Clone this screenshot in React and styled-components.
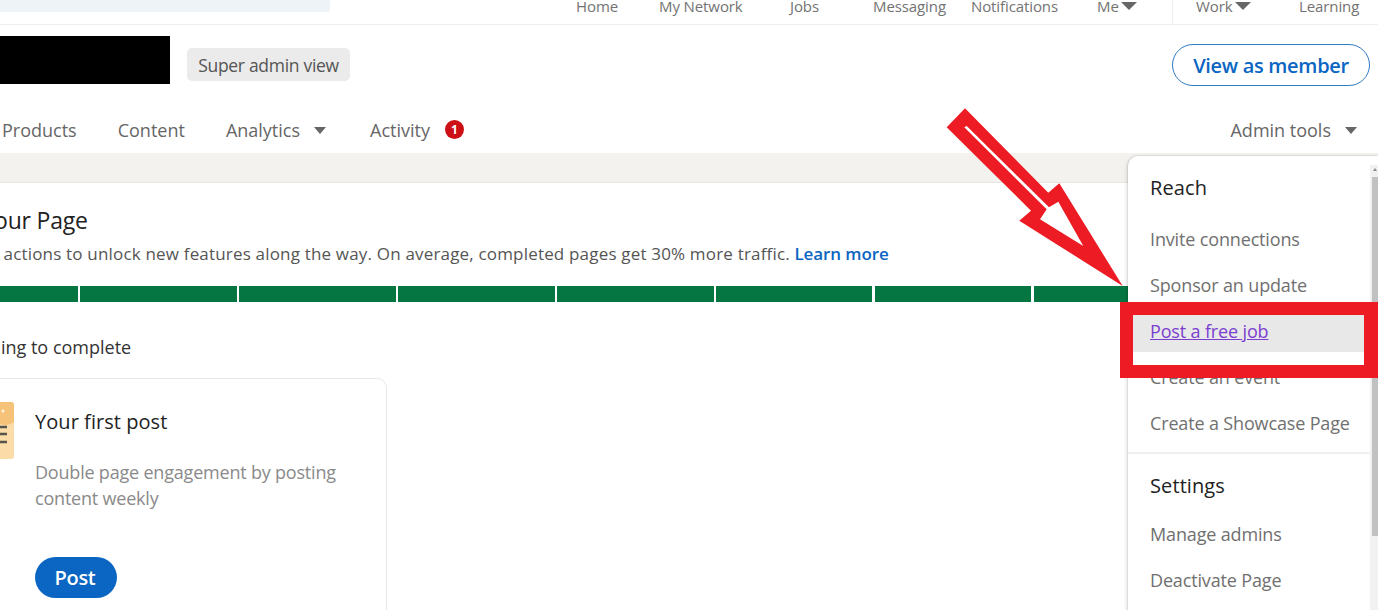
import React from 'react';
import styled, { createGlobalStyle } from 'styled-components';

const GlobalStyle = createGlobalStyle`
html, body {
  margin: 0;
  padding: 0;
  background: #fff;
  overflow: hidden;
}
body {
  font-family: "Open Sans", "Noto Sans", "Liberation Sans", sans-serif;
  color: #666;
}
`;

const Page = styled.div`
  position: relative;
  width: 1378px;
  height: 610px;
  overflow: hidden;
  background: #fff;
`;

const TopNav = styled.div`
  display: flex;
  justify-content: space-between;
  box-sizing: border-box;
  height: 25px;
  border-bottom: 1px solid #eeeeee;
`;
const SearchBar = styled.div`
  width: 330px;
  height: 12px;
  background: #eef3f8;
  border-radius: 0 0 2px 0;
`;
const NavLinks = styled.div`
  display: flex;
  align-items: flex-start;
  height: 24px;
`;
const NavLink = styled.div`
  display: flex;
  align-items: center;
  gap: 2px;
  width: ${(p) => p.$w}px;
  height: 12px;
  font-size: 15px;
  letter-spacing: -0.1px;
  line-height: 12px;
  color: #737373;
  white-space: nowrap;
`;
const NavDivider = styled.div`
  width: 1px;
  height: 24px;
  background: #eeeeee;
  margin-right: 23px;
`;
const TinyCaret = styled.span`
  width: 0;
  height: 0;
  border-left: 8px solid transparent;
  border-right: 8px solid transparent;
  border-top: 8px solid #666;
`;

const HeaderRow = styled.div`
  display: flex;
  align-items: flex-start;
  justify-content: space-between;
  height: 80px;
  padding-right: 8px;
`;
const HeaderLeft = styled.div`
  display: flex;
  align-items: flex-start;
  gap: 17px;
`;
const Redacted = styled.div`
  width: 170px;
  height: 48px;
  margin-top: 11px;
  background: #000;
`;
const RoleBadge = styled.div`
  width: 163px;
  height: 33px;
  margin-top: 23px;
  border-radius: 5px;
  background: #ebebeb;
  display: flex;
  align-items: center;
  justify-content: center;
  font-size: 17.5px;
  letter-spacing: -0.3px;
  color: #555;
`;
const MemberButton = styled.button`
  width: 198px;
  height: 42px;
  margin-top: 19px;
  border: 1.5px solid #2f7bc4;
  border-radius: 21px;
  background: #fff;
  color: #0a66c2;
  font-family: inherit;
  font-size: 20px;
  font-weight: 600;
  letter-spacing: -0.3px;
  padding: 0;
`;

const TabsRow = styled.div`
  display: flex;
  align-items: center;
  justify-content: space-between;
  box-sizing: border-box;
  height: 48px;
  padding: 2px 21px 0 2px;
`;
const Tabs = styled.div`
  display: flex;
  align-items: center;
  gap: 41px;
`;
const Tab = styled.div`
  display: flex;
  align-items: center;
  gap: ${(p) => p.$gap || 14}px;
  margin-left: ${(p) => p.$lead || 0}px;
  font-size: 18px;
  color: #666;
  white-space: nowrap;
`;
const Caret = styled.span`
  width: 0;
  height: 0;
  border-left: 6.5px solid transparent;
  border-right: 6.5px solid transparent;
  border-top: 7px solid #666;
`;
const Badge = styled.span`
  width: 19px;
  height: 19px;
  border-radius: 50%;
  background: #cc1016;
  color: #fff;
  font-size: 12px;
  font-weight: 700;
  display: flex;
  align-items: center;
  justify-content: center;
  margin-top: -2px;
`;

const Band = styled.div`
  height: 29px;
  background: #f3f2ee;
  border-bottom: 1px solid #e6e6e3;
`;

const Content = styled.div`
  padding: 23px 0 0;
`;
const Title = styled.h1`
  margin: 0 0 0 -125px;
  font-size: 23px;
  line-height: 28px;
  font-weight: 400;
  letter-spacing: -0.2px;
  color: #222;
  white-space: nowrap;
`;
const Lead = styled.p`
  margin: 8px 0 0 -79px;
  font-size: 17px;
  line-height: 24px;
  letter-spacing: 0.18px;
  color: #555;
  white-space: nowrap;
`;
const LearnMore = styled.span`
  color: #0a66c2;
  font-weight: 600;
  letter-spacing: -0.1px;
`;
const Progress = styled.div`
  display: flex;
  gap: 2.3px;
  margin: 20px 0 0 -78.6px;
  width: 1240px;
`;
const Segment = styled.div`
  flex: 0 0 156.6px;
  height: 16px;
  background: #057642;
`;
const Subhead = styled.h2`
  margin: 33px 0 0 -64px;
  font-size: 18px;
  line-height: 24px;
  font-weight: 500;
  color: #333;
  white-space: nowrap;
`;
const Card = styled.div`
  display: flex;
  gap: 21px;
  width: 407px;
  height: 260px;
  margin: 19px 0 0 -20px;
  box-sizing: border-box;
  padding: 23px 0 0 19px;
  border: 1px solid #e8e8e8;
  border-radius: 10px;
  background: #fff;
`;
const CardBody = styled.div`
  display: flex;
  flex-direction: column;
  align-items: flex-start;
  padding-top: 7px;
`;
const CardTitle = styled.div`
  font-size: 20px;
  line-height: 26px;
  font-weight: 500;
  letter-spacing: 0.05px;
  color: #222;
`;
const CardText = styled.div`
  margin-top: 24px;
  width: 320px;
  font-size: 18px;
  line-height: 26px;
  letter-spacing: -0.2px;
  color: #8a8a8a;
`;
const PostButton = styled.button`
  width: 82px;
  height: 41px;
  margin-top: 46px;
  border: none;
  border-radius: 21px;
  background: #0a66c2;
  color: #fff;
  font-family: inherit;
  font-size: 20px;
  font-weight: 600;
  letter-spacing: -0.3px;
  padding: 0 2px 0 0;
`;

const Menu = styled.div`
  position: absolute;
  left: 1128px;
  top: 156px;
  width: 250px;
  height: 470px;
  background: #fff;
  border-radius: 10px 0 0 0;
  box-shadow: 0 0 0 1px rgba(0, 0, 0, 0.06), -1px 1px 4px rgba(0, 0, 0, 0.14);
`;
const MenuSection = styled.div`
  width: 220px;
  padding: 16px 0 6px 22px;
  border-top: ${(p) => (p.$divided ? '2px solid #f0f0f0' : 'none')};
`;
const MenuHeading = styled.div`
  font-size: 20px;
  line-height: 32px;
  font-weight: 500;
  letter-spacing: 0.1px;
  color: #222;
  margin-bottom: ${(p) => p.$gap}px;
`;
const MenuItem = styled.div`
  height: ${(p) => (p.$active ? 44 : 46)}px;
  margin-bottom: ${(p) => (p.$active ? 2 : 0)}px;
  line-height: 46px;
  margin-left: -22px;
  padding-left: 22px;
  font-size: 18px;
  letter-spacing: -0.15px;
  white-space: nowrap;
  color: ${(p) => (p.$active ? '#7b3fd0' : '#707070')};
  text-decoration: ${(p) => (p.$active ? 'underline' : 'none')};
  background: ${(p) => (p.$active ? '#e8e8e8' : 'transparent')};
`;
const Scrollbar = styled.div`
  position: absolute;
  right: 0;
  top: 9px;
  display: flex;
  flex-direction: column;
  align-items: flex-end;
  width: 8px;
  height: 461px;
  background: #f1f1f1;
`;
const ScrollUp = styled.span`
  width: 0;
  height: 0;
  margin: 3px 1px 6px 0;
  border-left: 2px solid transparent;
  border-right: 2px solid transparent;
  border-bottom: 3px solid #8a8a8a;
`;
const ScrollThumb = styled.div`
  width: 6px;
  height: 359px;
  background: #c1c1c1;
`;

const HighlightBox = styled.div`
  position: absolute;
  left: 1120px;
  top: 302px;
  width: 258px;
  height: 76px;
  box-sizing: border-box;
  border: 13px solid #ed1c24;
  border-right-width: 14px;
`;
const ArrowSvg = styled.svg`
  position: absolute;
  left: 940px;
  top: 100px;
`;

function DocIcon() {
  return (
    <svg width="14" height="58" viewBox="0 0 14 58" style={{ flex: 'none' }}>
      <path d="M-20 0 H11 a3 3 0 0 1 3 3 V54 a3 3 0 0 1 -3 3 H-20 Z" fill="#fbdca8" />
      <path d="M-20 0 H11 a3 3 0 0 1 3 3 V20 Q8 25 0 22 Q-10 20 -20 22 Z" fill="#f6c27a" />
      <circle cx="3" cy="9" r="1.5" fill="#fff3dc" />
      <path d="M0 25 H7 M0 32 H7 M0 40 H7" stroke="#56524c" strokeWidth="2.4" />
    </svg>
  );
}

const navLinks = [
  ['Home', 83],
  ['My Network', 131],
  ['Jobs', 83],
  ['Messaging', 98],
  ['Notifications', 126],
];

export default function App() {
  return (
    <Page>
      <GlobalStyle />
      <TopNav>
        <SearchBar />
        <NavLinks>
          {navLinks.map(([label, w]) => (
            <NavLink key={label} $w={w}>{label}</NavLink>
          ))}
          <NavLink $w={75}>Me<TinyCaret /></NavLink>
          <NavDivider />
          <NavLink $w={103}>Work<TinyCaret /></NavLink>
          <NavLink $w={79}>Learning</NavLink>
        </NavLinks>
      </TopNav>

      <HeaderRow>
        <HeaderLeft>
          <Redacted />
          <RoleBadge>Super admin view</RoleBadge>
        </HeaderLeft>
        <MemberButton>View as member</MemberButton>
      </HeaderRow>

      <TabsRow>
        <Tabs>
          <Tab>Products</Tab>
          <Tab>Content</Tab>
          <Tab>Analytics<Caret /></Tab>
          <Tab $gap={15} $lead={3}>Activity<Badge>1</Badge></Tab>
        </Tabs>
        <Tab>Admin tools<Caret /></Tab>
      </TabsRow>

      <Band />

      <Content>
        <Title>Complete your Page</Title>
        <Lead>
          Complete actions to unlock new features along the way. On average, completed pages get 30% more traffic. <LearnMore>Learn more</LearnMore>
        </Lead>
        <Progress>
          {Array.from({ length: 8 }).map((_, i) => <Segment key={i} />)}
        </Progress>
        <Subhead>Something to complete</Subhead>
        <Card>
          <DocIcon />
          <CardBody>
            <CardTitle>Your first post</CardTitle>
            <CardText>Double page engagement by posting content weekly</CardText>
            <PostButton>Post</PostButton>
          </CardBody>
        </Card>
      </Content>

      <Menu>
        <MenuSection>
          <MenuHeading $gap={12}>Reach</MenuHeading>
          <MenuItem>Invite connections</MenuItem>
          <MenuItem>Sponsor an update</MenuItem>
          <MenuItem $active>Post a free job</MenuItem>
          <MenuItem>Create an event</MenuItem>
          <MenuItem>Create a Showcase Page</MenuItem>
        </MenuSection>
        <MenuSection $divided>
          <MenuHeading $gap={9}>Settings</MenuHeading>
          <MenuItem>Manage admins</MenuItem>
          <MenuItem>Deactivate Page</MenuItem>
        </MenuSection>
        <Scrollbar>
          <ScrollUp />
          <ScrollThumb />
        </Scrollbar>
      </Menu>

      <HighlightBox />
      <ArrowSvg width="200" height="200" viewBox="0 0 200 200">
        <path d="M25 8.3 L108.3 92.7 L119.3 83.3 L182.7 186 L79.3 120.7 L91 110.7 L6.7 27.3 Z" fill="#ed1c24" />
        <path d="M24.3 27.3 L26.7 26 L109 107.3 L118.3 101.7 L143.3 146 L100 119.3 L106.7 109.3 Z" fill="#fff" />
      </ArrowSvg>
    </Page>
  );
}
